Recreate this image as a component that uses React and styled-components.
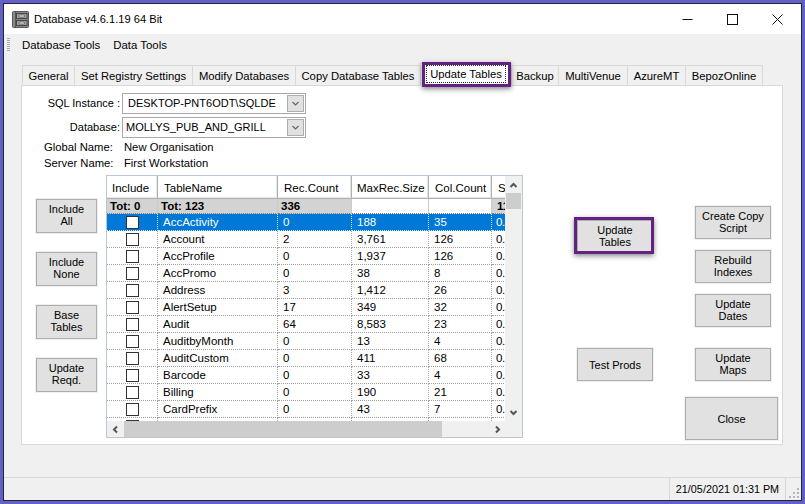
import React from "react";
import styled, { createGlobalStyle } from "styled-components";

const Global = createGlobalStyle`
  html, body { margin: 0; padding: 0; background: #6262c6; }
  #root { width: 805px; height: 504px; overflow: hidden; }
  * { box-sizing: border-box; }
`;

const Desktop = styled.div`
  width: 805px;
  height: 504px;
  padding: 3px;
  font-family: "Liberation Sans", Arial, sans-serif;
  font-size: 11.25px;
  color: #000;
`;
const Window = styled.div`
  width: 799px;
  height: 498px;
  border: 1px solid #23233a;
  background: #f0f0f0;
  display: flex;
  flex-direction: column;
`;
const TitleBar = styled.div`
  height: 30px;
  background: #fff;
  display: flex;
  align-items: center;
  padding-left: 8px;
  flex: none;
`;
const TitleText = styled.span`
  margin-left: 5px;
  font-size: 11.15px;
`;
const WinControls = styled.div`
  margin-left: auto;
  display: flex;
  align-items: center;
  gap: 34px;
  padding-right: 18px;
`;
const MenuBar = styled.div`
  height: 22px;
  display: flex;
  align-items: center;
  padding: 1px 0 2px 3px;
  font-size: 11.4px;
  flex: none;
`;
const Grip = styled.div`
  width: 3px;
  height: 14px;
  margin-right: 12px;
  background: repeating-linear-gradient(to bottom, #a8a8a8 0 1px, #f0f0f0 1px 2px);
`;
const MenuItem = styled.span`
  margin-right: 13px;
`;
const TabArea = styled.div`
  margin: 9px 0 0 17px;
  width: 762px;
  flex: none;
`;
const TabStrip = styled.div`
  display: flex;
  height: 20px;
  padding-left: 1px;
  align-items: flex-end;
`;
const Tab = styled.div`
  position: relative;
  width: ${(p) => p.$w}px;
  height: ${(p) => (p.$active ? 23 : 20)}px;
  margin-bottom: ${(p) => (p.$active ? -1 : 0)}px;
  border: 1px solid #d9d9d9;
  border-bottom: none;
  margin-right: -1px;
  background: ${(p) => (p.$active ? "#fff" : "#f0f0f0")};
  display: flex;
  align-items: center;
  justify-content: center;
  white-space: nowrap;
  z-index: ${(p) => (p.$active ? 2 : 1)};
`;
const FocusText = styled.span`
  outline: 1px dotted #333;
  padding: 2px 3px;
  margin-top: -3px;
`;
const Highlight = styled.div`
  position: absolute;
  inset: ${(p) => p.$inset};
  border: 3px solid #61237f;
  box-shadow: 0 2px 5px rgba(40, 40, 40, 0.55);
  pointer-events: none;
`;
const Page = styled.div`
  height: 360px;
  background: #fff;
  border: 1px solid #d9d9d9;
  padding-top: 7px;
`;
const FormRow = styled.div`
  display: flex;
  align-items: center;
  height: 21px;
  margin-bottom: ${(p) => p.$mb || 0}px;
`;
const FormLabel = styled.div`
  width: 98px;
  padding-bottom: 2px;
  text-align: right;
  font-size: 11px;
  white-space: nowrap;
  margin-right: 2px;
`;
const Combo = styled.div`
  width: 184px;
  height: 21px;
  border: 1px solid #a8a8a8;
  display: flex;
  align-items: center;
  padding: 0 0 2px ${(p) => p.$pad}px;
  position: relative;
  font-size: 11px;
  white-space: nowrap;
`;
const ComboButton = styled.div`
  position: absolute;
  right: 1px;
  top: 1px;
  bottom: 1px;
  width: 17px;
  background: #e1e1e1;
  border: 1px solid #adadad;
  display: flex;
  align-items: center;
  justify-content: center;
`;
const InfoRow = styled.div`
  display: flex;
  height: 16px;
  align-items: center;
  padding: 2px 0 0 22px;
`;
const InfoLabel = styled.div`
  width: 80px;
`;
const Body = styled.div`
  display: flex;
  align-items: flex-start;
  padding-left: 14px;
  margin-top: 5px;
`;
const LeftCol = styled.div`
  width: 61px;
  margin-top: 24px;
  display: flex;
  flex-direction: column;
  gap: 19px;
  flex: none;
`;
const Btn = styled.div`
  position: relative;
  flex: none;
  width: ${(p) => p.$w || 76}px;
  height: ${(p) => p.$h || 33}px;
  margin-top: ${(p) => p.$mt || 0}px;
  margin-left: ${(p) => p.$ml || 0}px;
  padding-bottom: ${(p) => (p.$single ? 0 : 2)}px;
  background: #e1e1e1;
  border: 1px solid #adadad;
  box-shadow: 0 0 0 1px #f0f0f0;
  display: flex;
  align-items: center;
  justify-content: center;
  text-align: center;
  font-size: 11px;
  line-height: 12px;
  white-space: pre-line;
`;
const GridFrame = styled.div`
  width: 417px;
  height: 263px;
  margin-left: 9px;
  border: 1px solid #b9c8d4;
  flex: none;
  display: flex;
  flex-direction: column;
`;
const GridMain = styled.div`
  display: flex;
  height: 245px;
  flex: none;
`;
const Viewport = styled.div`
  width: 398px;
  height: 245px;
  overflow: hidden;
  flex: none;
  font-size: 11.5px;
`;
const Row = styled.div`
  display: grid;
  grid-template-columns: 51px 120px 74px 77px 63px 20px;
  height: ${(p) => p.$h || 17}px;
  width: 405px;
  overflow: hidden;
  background: ${(p) => (p.$selected ? "#0078d7" : "#fff")};
  color: ${(p) => (p.$selected ? "#fff" : "#000")};
`;
const HeadCell = styled.div`
  background: #fff;
  border-right: 1px solid #a9b4b4;
  border-bottom: 1px solid #a9b4b4;
  box-shadow: inset -1px -1px 0 #e6e6e6;
  display: flex;
  align-items: center;
  padding: 1px 0 0 ${(p) => p.$pad}px;
  white-space: nowrap;
  overflow: hidden;
`;
const TotalCell = styled.div`
  background: ${(p) => (p.$blank ? "#fff" : "#d3d3d3")};
  font-weight: bold;
  display: flex;
  align-items: center;
  padding-left: ${(p) => p.$pad}px;
  border-right: 1px solid #c2cdd6;
  border-bottom: 1px dotted #7f7f7f;
  white-space: nowrap;
  overflow: hidden;
`;
const Cell = styled.div`
  display: flex;
  align-items: center;
  justify-content: ${(p) => (p.$center ? "center" : "flex-start")};
  padding-left: ${(p) => p.$pad || 0}px;
  border-right: 1px dotted ${(p) => (p.$selected ? "#cfe4f7" : "#a0a0a0")};
  border-bottom: 1px dotted ${(p) => (p.$selected ? "#cfe4f7" : "#a0a0a0")};
  letter-spacing: ${(p) => p.$track || 0}px;
  white-space: nowrap;
  overflow: hidden;
`;
const Check = styled.div`
  width: 13px;
  height: 13px;
  border: 1px solid #333;
  background: #fff;
  flex: none;
`;
const VScroll = styled.div`
  width: 17px;
  height: 245px;
  background: #f0f0f0;
  display: flex;
  flex-direction: column;
  align-items: center;
  flex: none;
  padding: 5px 0 4px;
`;
const VThumb = styled.div`
  width: 15px;
  height: 16px;
  margin: 3px 0 auto;
  background: #cdcdcd;
`;
const HScroll = styled.div`
  height: 16px;
  background: #f0f0f0;
  display: flex;
  align-items: center;
  flex: none;
`;
const ArrowBox = styled.div`
  width: ${(p) => p.$w}px;
  margin-left: ${(p) => (p.$auto ? "auto" : 0)};
  display: flex;
  justify-content: center;
  flex: none;
`;
const HThumb = styled.div`
  width: 318px;
  height: 16px;
  background: #cdcdcd;
  flex: none;
`;
const CenterCol = styled.div`
  width: 76px;
  margin-left: 54px;
  display: flex;
  flex-direction: column;
  flex: none;
`;
const RightCol = styled.div`
  width: 93px;
  margin-left: 32px;
  display: flex;
  flex-direction: column;
  flex: none;
`;
const StatusBar = styled.div`
  margin-top: auto;
  height: 23px;
  border-top: 1px solid #d7d7d7;
  display: flex;
  justify-content: flex-end;
  flex: none;
  position: relative;
`;
const StatusCell = styled.div`
  width: 117px;
  margin-right: 15px;
  border-left: 1px solid #d7d7d7;
  border-right: 1px solid #d7d7d7;
  display: flex;
  align-items: center;
  justify-content: center;
  font-size: 10.8px;
  white-space: nowrap;
`;
const SizeGrip = styled.svg`
  position: absolute;
  right: 1px;
  bottom: 1px;
`;

const Chevron = ({ dir = "down", color = "#555", size = 9, sw = 2 }) => {
  const d = {
    down: "M1.5 3 L4.5 6 L7.5 3",
    up: "M1.5 6 L4.5 3 L7.5 6",
    left: "M6 1.5 L3 4.5 L6 7.5",
    right: "M3 1.5 L6 4.5 L3 7.5",
  }[dir];
  return (
    <svg width={size} height={size} viewBox="0 0 9 9">
      <path d={d} fill="none" stroke={color} strokeWidth={sw} />
    </svg>
  );
};

const CabinetIcon = () => (
  <svg width="17" height="17" viewBox="0 0 17 17">
    <rect x="0.5" y="0.5" width="16" height="16" rx="1" fill="#8a8a8a" stroke="#555" />
    <path d="M3.5 1 V16" stroke="#555" />
    <rect x="4.5" y="2.5" width="10.5" height="5" fill="#a6a6a6" stroke="#3c3c3c" strokeWidth="0.9" />
    <rect x="4.5" y="9.5" width="10.5" height="5" fill="#a6a6a6" stroke="#3c3c3c" strokeWidth="0.9" />
    <rect x="7" y="4" width="5.5" height="2" fill="#e2e2e2" stroke="#444" strokeWidth="0.6" />
    <rect x="7" y="11" width="5.5" height="2" fill="#e2e2e2" stroke="#444" strokeWidth="0.6" />
  </svg>
);

const tabs = [
  ["General", 53],
  ["Set Registry Settings", 119],
  ["Modify Databases", 104],
  ["Copy Database Tables", 126],
  ["Update Tables", 92, true],
  ["Backup", 48],
  ["MultiVenue", 70],
  ["AzureMT", 59],
  ["BepozOnline", 78],
];

const rows = [
  ["AccActivity", "0", "188", "35"],
  ["Account", "2", "3,761", "126"],
  ["AccProfile", "0", "1,937", "126"],
  ["AccPromo", "0", "38", "8"],
  ["Address", "3", "1,412", "26"],
  ["AlertSetup", "17", "349", "32"],
  ["Audit", "64", "8,583", "23"],
  ["AuditbyMonth", "0", "13", "4"],
  ["AuditCustom", "0", "411", "68"],
  ["Barcode", "0", "33", "4"],
  ["Billing", "0", "190", "21"],
  ["CardPrefix", "0", "43", "7"],
  ["", "", "", ""],
];

export default function App() {
  return (
    <Desktop>
      <Global />
      <Window>
        <TitleBar>
          <CabinetIcon />
          <TitleText>Database v4.6.1.19 64 Bit</TitleText>
          <WinControls>
            <svg width="11" height="11" viewBox="0 0 11 11">
              <path d="M0.5 5.5 H10.5" stroke="#111" />
            </svg>
            <svg width="11" height="11" viewBox="0 0 11 11">
              <rect x="0.5" y="0.5" width="10" height="10" fill="none" stroke="#111" />
            </svg>
            <svg width="11" height="11" viewBox="0 0 11 11">
              <path d="M0.5 0.5 L10.5 10.5 M10.5 0.5 L0.5 10.5" stroke="#111" />
            </svg>
          </WinControls>
        </TitleBar>
        <MenuBar>
          <Grip />
          <MenuItem>Database Tools</MenuItem>
          <MenuItem>Data Tools</MenuItem>
        </MenuBar>
        <TabArea>
          <TabStrip>
            {tabs.map(([t, w, active]) => (
              <Tab key={t} $w={w} $active={active}>
                {active ? (
                  <>
                    <FocusText>{t}</FocusText>
                    <Highlight $inset="-2px 0 -1px 1px" />
                  </>
                ) : (
                  t
                )}
              </Tab>
            ))}
          </TabStrip>
          <Page>
            <FormRow $mb={3}>
              <FormLabel>SQL Instance :</FormLabel>
              <Combo $pad={5}>
                DESKTOP-PNT6ODT\SQLDE
                <ComboButton>
                  <Chevron color="#666" sw={1.2} />
                </ComboButton>
              </Combo>
            </FormRow>
            <FormRow>
              <FormLabel>Database:</FormLabel>
              <Combo $pad={3}>
                MOLLYS_PUB_AND_GRILL
                <ComboButton>
                  <Chevron color="#666" sw={1.2} />
                </ComboButton>
              </Combo>
            </FormRow>
            <InfoRow>
              <InfoLabel>Global Name:</InfoLabel>
              New Organisation
            </InfoRow>
            <InfoRow>
              <InfoLabel>Server Name:</InfoLabel>
              First Workstation
            </InfoRow>
            <Body>
              <LeftCol>
                <Btn $w={61} $h={34}>{"Include\nAll"}</Btn>
                <Btn $w={61} $h={34}>{"Include\nNone"}</Btn>
                <Btn $w={61} $h={34}>{"Base\nTables"}</Btn>
                <Btn $w={61} $h={34}>{"Update\nReqd."}</Btn>
              </LeftCol>
              <GridFrame>
                <GridMain>
                  <Viewport>
                    <Row $h={23}>
                      <HeadCell $pad={5}>Include</HeadCell>
                      <HeadCell $pad={6}>TableName</HeadCell>
                      <HeadCell $pad={6}>Rec.Count</HeadCell>
                      <HeadCell $pad={5}>MaxRec.Size</HeadCell>
                      <HeadCell $pad={6}>Col.Count</HeadCell>
                      <HeadCell $pad={6}>S</HeadCell>
                    </Row>
                    <Row $h={15}>
                      <TotalCell $pad={3}>Tot: 0</TotalCell>
                      <TotalCell $pad={3}>Tot: 123</TotalCell>
                      <TotalCell $pad={3}>336</TotalCell>
                      <TotalCell $blank $pad={3} />
                      <TotalCell $blank $pad={3} />
                      <TotalCell $pad={5}>11</TotalCell>
                    </Row>
                    {rows.map((r, i) => {
                      const sel = i === 0;
                      return (
                        <Row key={i} $selected={sel}>
                          <Cell $center $selected={sel}>
                            <Check />
                          </Cell>
                          <Cell $pad={5} $selected={sel}>{r[0]}</Cell>
                          <Cell $pad={5} $selected={sel}>{r[1]}</Cell>
                          <Cell $pad={5} $selected={sel}>{r[2]}</Cell>
                          <Cell $pad={5} $selected={sel}>{r[3]}</Cell>
                          <Cell $pad={4} $track={-0.5} $selected={sel}>{r[0] ? "0." : ""}</Cell>
                        </Row>
                      );
                    })}
                  </Viewport>
                  <VScroll>
                    <Chevron dir="up" />
                    <VThumb />
                    <Chevron dir="down" />
                  </VScroll>
                </GridMain>
                <HScroll>
                  <ArrowBox $w={17}>
                    <Chevron dir="left" />
                  </ArrowBox>
                  <HThumb />
                  <ArrowBox $auto $w={50}>
                    <Chevron dir="right" />
                  </ArrowBox>
                </HScroll>
              </GridFrame>
              <CenterCol>
                <Btn $mt={45}>
                  {"Update\nTables"}
                  <Highlight $inset="-4px -2px -2px -4px" />
                </Btn>
                <Btn $mt={95} $single>Test Prods</Btn>
              </CenterCol>
              <RightCol>
                <Btn $mt={31} $ml={10}>{"Create Copy\nScript"}</Btn>
                <Btn $mt={11} $ml={10}>{"Rebuild\nIndexes"}</Btn>
                <Btn $mt={11} $ml={10}>{"Update\nDates"}</Btn>
                <Btn $mt={21} $ml={10}>{"Update\nMaps"}</Btn>
                <Btn $mt={16} $w={93} $h={43} $single>Close</Btn>
              </RightCol>
            </Body>
          </Page>
        </TabArea>
        <StatusBar>
          <StatusCell>21/05/2021 01:31 PM</StatusCell>
          <SizeGrip width="11" height="11" viewBox="0 0 11 11">
            <g fill="#b5b5b5">
              <rect x="8" y="0" width="2" height="2" />
              <rect x="4" y="4" width="2" height="2" />
              <rect x="8" y="4" width="2" height="2" />
              <rect x="0" y="8" width="2" height="2" />
              <rect x="4" y="8" width="2" height="2" />
              <rect x="8" y="8" width="2" height="2" />
            </g>
          </SizeGrip>
        </StatusBar>
      </Window>
    </Desktop>
  );
}
